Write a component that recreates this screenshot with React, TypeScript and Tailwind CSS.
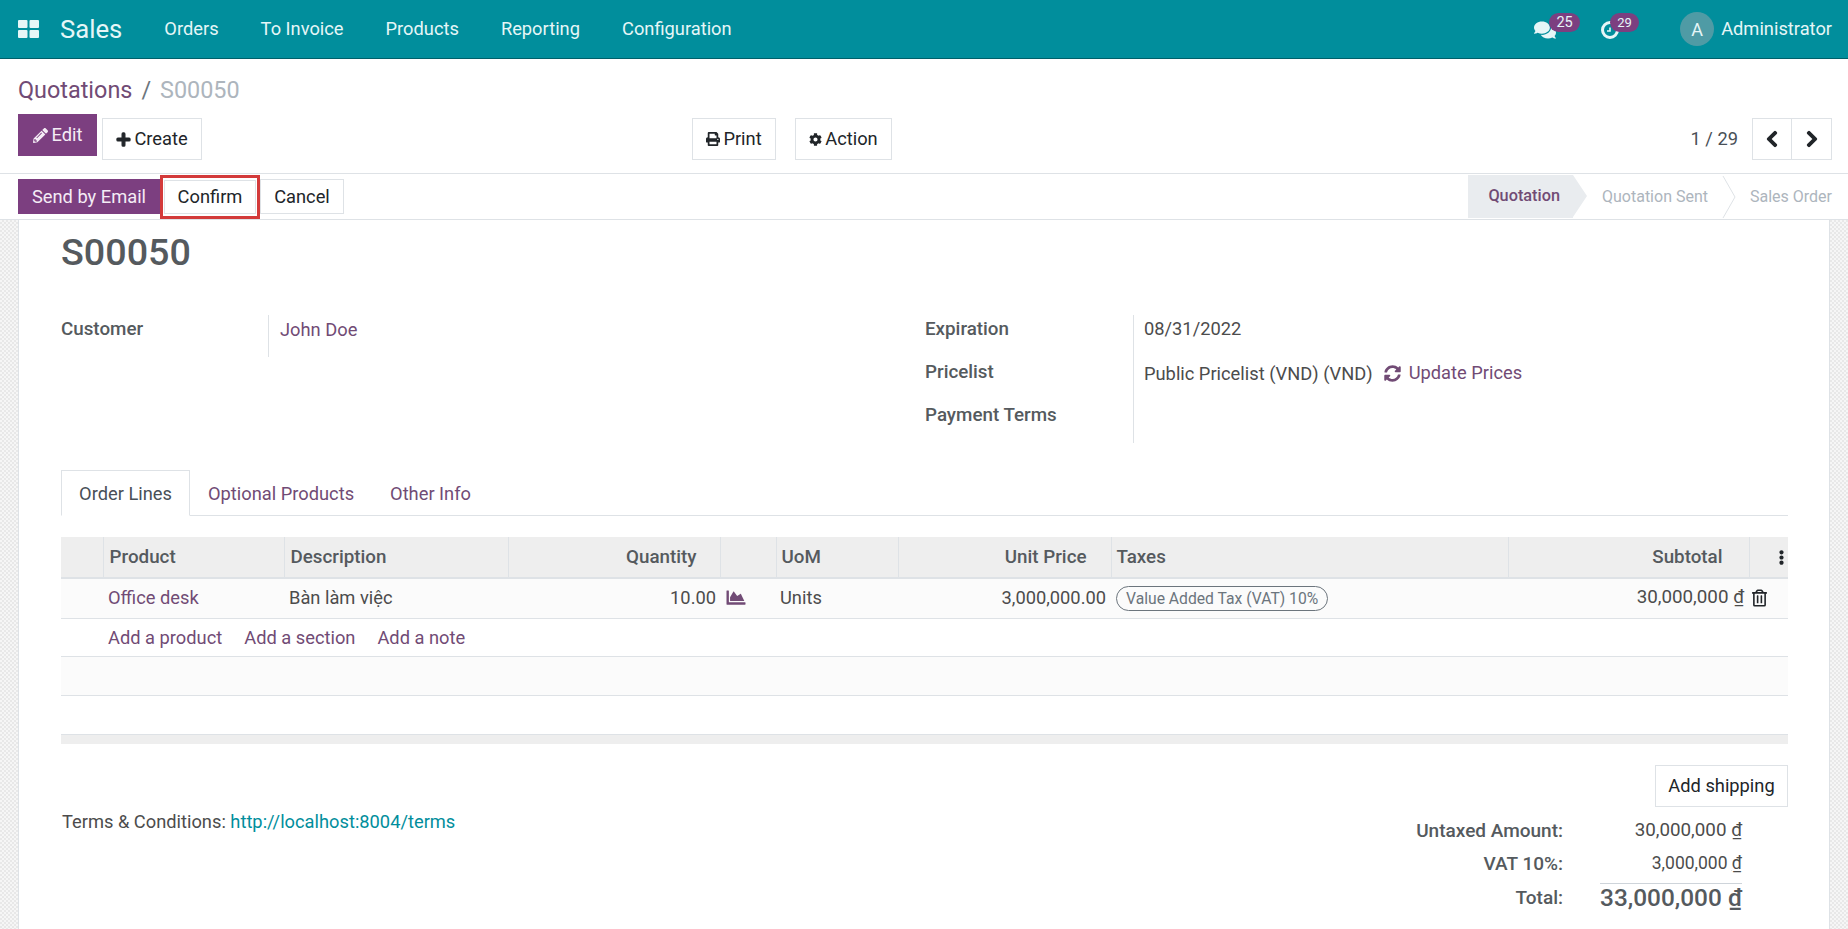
import { FaPencilAlt, FaPlus, FaPrint, FaCog, FaChevronLeft, FaChevronRight, FaComments, FaSyncAlt, FaChartArea, FaRegTrashAlt, FaEllipsisV } from 'react-icons/fa';

const MENU = ['Orders', 'To Invoice', 'Products', 'Reporting', 'Configuration'];

function Navbar() {
  return (
    <header className="flex h-[59px] shrink-0 items-center border-b border-[#00606a] bg-[#018e9c] pl-[18px] pr-[16px] text-[#e6f6f7]">
      <svg viewBox="0 0 21 18" className="h-[18px] w-[21px]" fill="currentColor">
        <rect x="0" y="0" width="9.5" height="8" rx="1" />
        <rect x="11.5" y="0" width="9.5" height="8" rx="1" />
        <rect x="0" y="10" width="9.5" height="8" rx="1" />
        <rect x="11.5" y="10" width="9.5" height="8" rx="1" />
      </svg>
      <span className="ml-[21px] text-[25.7px]">Sales</span>
      <nav className="ml-[42px] flex gap-[42px] text-[18.3px]">
        {MENU.map((item) => (
          <span key={item}>{item}</span>
        ))}
      </nav>
      <div className="ml-auto flex items-center">
        <div className="relative mr-[19px] h-[20px] w-[47px]">
          <FaComments className="mt-[1px] h-[20px] w-[22px]" />
          <span className="absolute -top-[6px] left-[15px] flex h-[19px] w-[31px] items-center justify-center rounded-full bg-[#7c3f80] text-[14.5px]">25</span>
        </div>
        <div className="relative mr-[41px] h-[20px] w-[39px]">
          <svg viewBox="0 0 20 20" className="mt-[1px] h-[20px] w-[20px]" fill="none" stroke="currentColor">
            <circle cx="10" cy="10" r="7.5" strokeWidth="3" />
            <path d="M10 7.5V11H7" strokeWidth="1.6" />
          </svg>
          <span className="absolute -top-[6px] left-[10px] flex h-[19px] w-[29px] items-center justify-center rounded-full bg-[#7c3f80] text-[13px]">29</span>
        </div>
        <span className="flex h-[34px] w-[34px] items-center justify-center rounded-full bg-[#4f9ba5] text-[18px]">A</span>
        <span className="ml-[7px] text-[18.3px]">Administrator</span>
      </div>
    </header>
  );
}

function Btn({ children, className = '' }: { children: React.ReactNode; className?: string }) {
  return (
    <button className={`flex h-[42px] items-center justify-center gap-[3px] border border-[#dee2e6] bg-white text-[18.3px] text-[#212529] ${className}`}>
      {children}
    </button>
  );
}

function ControlPanel() {
  return (
    <div className="shrink-0 border-b border-[#dee2e6] bg-white">
      <div className="pl-[18px] pt-[16px] text-[23.4px] leading-[30px]">
        <span className="text-[#714b75]">Quotations</span>
        <span className="mx-[9px] text-[#6c757d]">/</span>
        <span className="text-[#adb5bd]">S00050</span>
      </div>
      <div className="mt-[1px] flex h-[67px] pl-[18px] pr-[16px]">
        <div className="flex w-[674px] items-start pt-[8px]">
          <button className="flex h-[42px] w-[79px] items-center justify-center gap-[4px] bg-[#7c3f80] text-[18.3px] text-[#f4ecf5]">
            <FaPencilAlt className="h-[15px] w-[15px]" />
            Edit
          </button>
          <Btn className="ml-[5px] mt-[4px] w-[100px]">
            <FaPlus className="h-[15px] w-[15px]" stroke="currentColor" strokeWidth={40} />
            Create
          </Btn>
        </div>
        <div className="flex items-start pt-[12px]">
          <Btn className="w-[84px]">
            <FaPrint className="h-[14px] w-[14px]" />
            Print
          </Btn>
          <Btn className="ml-[19px] w-[97px]">
            <FaCog className="h-[13px] w-[13px]" />
            Action
          </Btn>
        </div>
        <div className="ml-auto flex items-start pt-[12px]">
          <span className="mr-[14px] text-[18.3px] leading-[42px] text-[#495057]">1 / 29</span>
          <div className="flex h-[42px] border border-[#dee2e6] text-[#212529]">
            <span className="flex w-[39px] items-center justify-center border-r border-[#dee2e6]">
              <FaChevronLeft className="h-[18px] w-[14px]" stroke="currentColor" strokeWidth={30} />
            </span>
            <span className="flex w-[39px] items-center justify-center">
              <FaChevronRight className="h-[18px] w-[14px]" stroke="currentColor" strokeWidth={30} />
            </span>
          </div>
        </div>
      </div>
    </div>
  );
}

function StatusBar() {
  return (
    <div className="flex h-[46px] shrink-0 items-stretch border-b border-[#dee2e6] bg-white pl-[18px] pr-[16px]">
      <div className="flex items-center">
        <button className="h-[35px] w-[142px] bg-[#7c3f80] text-[18.3px] text-[#f4ecf5]">Send by Email</button>
        <div className="relative z-10 flex h-[44px] w-[100px] items-center justify-center border-[3px] border-[#d33a3a]">
          <button className="h-[34px] w-[92px] border border-[#dee2e6] text-[18.3px] text-[#212529]">Confirm</button>
        </div>
        <button className="h-[35px] w-[84px] border border-[#dee2e6] text-[18.3px] text-[#212529]">Cancel</button>
      </div>
      <div className="ml-auto flex items-center text-[16px]">
        <div className="relative mr-[29px] flex h-[43px] w-[105px] items-center justify-end bg-[#e9ecef] pr-[13px] text-[16.3px] font-medium text-[#714b75]">
          Quotation
          <span className="absolute left-full top-0 h-0 w-0 border-y-[21.5px] border-l-[14px] border-y-transparent border-l-[#e9ecef]"></span>
        </div>
        <span className="text-[#adb5bd]">Quotation Sent</span>
        <svg viewBox="0 0 14 42" className="mx-[14px] h-[42px] w-[14px]" fill="none" stroke="#dee2e6">
          <path d="M1 0l12 21L1 42" />
        </svg>
        <span className="text-[#adb5bd]">Sales Order</span>
      </div>
    </div>
  );
}

function Field({ label, className = '' }: { label: string; className?: string }) {
  return <div className={`text-[18.8px] font-medium leading-[26px] text-[#555a5e] ${className}`}>{label}</div>;
}

function OrderForm() {
  return (
    <div className="pt-[12px] text-[#4c4c4c]">
      <h1 className="text-[37.7px] font-medium leading-[40px] text-[#555a5e]">S00050</h1>
      <div className="mt-[43px] flex text-[18.3px] leading-[26px]">
        <div className="flex w-[864px]">
          <Field label="Customer" className="w-[207px] pt-[1px]" />
          <div className="h-[42px] border-l border-[#dee2e6] pl-[11px] pt-[2px] text-[#714b75]">John Doe</div>
        </div>
        <div className="flex">
          <div className="w-[208px] space-y-[17px] pt-[1px]">
            <Field label="Expiration" />
            <Field label="Pricelist" />
            <Field label="Payment Terms" />
          </div>
          <div className="h-[128px] border-l border-[#dee2e6] pl-[10px] pt-[1px]">
            <div>08/31/2022</div>
            <div className="mt-[17px] flex items-center">
              <span className="pt-[2px]">Public Pricelist (VND) (VND)</span>
              <FaSyncAlt className="ml-[11px] h-[17px] w-[17px] text-[#714b75]" />
              <span className="ml-[8px] text-[#714b75]">Update Prices</span>
            </div>
          </div>
        </div>
      </div>
    </div>
  );
}

function OrderTabs() {
  return (
    <div className="mt-[27px] flex h-[46px] items-stretch border-b border-[#dee2e6] text-[18.3px] text-[#714b75]">
      <div className="-mb-px flex w-[129px] items-center justify-center border border-[#dee2e6] border-b-white bg-white pt-[2px] text-[#495057]">Order Lines</div>
      <span className="ml-[18px] flex items-center pt-[2px]">Optional Products</span>
      <span className="ml-[36px] flex items-center pt-[2px]">Other Info</span>
    </div>
  );
}

function OrderTable() {
  const th = 'h-[41px] border-l border-[#dee2e6] px-[5px] text-[18.8px] font-medium text-[#555a5e]';
  return (
    <table className="mt-[21px] w-full table-fixed border-collapse text-[18.3px] text-[#4c4c4c]">
      <colgroup>
        <col className="w-[42px]" />
        <col className="w-[181px]" />
        <col className="w-[224px]" />
        <col className="w-[212px]" />
        <col className="w-[56px]" />
        <col className="w-[122px]" />
        <col className="w-[213px]" />
        <col className="w-[397px]" />
        <col className="w-[241px]" />
        <col className="w-[39px]" />
      </colgroup>
      <thead>
        <tr className="border-b-2 border-[#dee2e6] bg-[#eeeeee] text-left">
          <th className="h-[41px]"></th>
          <th className={`${th} pl-[6px]`}>Product</th>
          <th className={`${th} pl-[6px]`}>Description</th>
          <th className={`${th} pr-[23px] text-right`}>Quantity</th>
          <th className={th}></th>
          <th className={th}>UoM</th>
          <th className={`${th} pr-[24px] text-right`}>Unit Price</th>
          <th className={th}>Taxes</th>
          <th className={`${th} pr-[26px] text-right`}>Subtotal</th>
          <th className={th}>
            <FaEllipsisV className="ml-[19px] h-[15px] w-[15px] text-[#212529]" />
          </th>
        </tr>
      </thead>
      <tbody>
        <tr className="h-[40px] border-b border-[#dee2e6] bg-[#fbfbfb]">
          <td></td>
          <td className="px-[5px] pb-[2px] text-[#714b75]">Office desk</td>
          <td className="px-[5px] pb-[2px]">Bàn làm việc</td>
          <td className="px-[4px] pb-[2px] text-right">10.00</td>
          <td className="px-[6px] pb-[1px]">
            <FaChartArea className="h-[19px] w-[20px] text-[#714b75]" />
          </td>
          <td className="px-[4px] pb-[2px]">Units</td>
          <td className="px-[5px] pb-[2px] text-right">3,000,000.00</td>
          <td className="px-[5px] pb-[2px]">
            <span className="inline-block h-[25px] rounded-full border border-[#6c757d] px-[9px] text-[15.7px] leading-[23px] text-[#6c757d]">
              Value Added Tax (VAT) 10%
            </span>
          </td>
          <td className="px-[5px] pb-[2px] text-right text-[18.8px]">
            30,000,000 <span className="underline">₫</span>
          </td>
          <td>
            <FaRegTrashAlt className="ml-[3px] h-[18px] w-[15px] text-[#212529]" />
          </td>
        </tr>
        <tr className="h-[38px] border-b border-[#dee2e6]">
          <td></td>
          <td colSpan={9} className="px-[5px] pt-[2px] text-[#714b75]">
            <span>Add a product</span>
            <span className="ml-[22px]">Add a section</span>
            <span className="ml-[22px]">Add a note</span>
          </td>
        </tr>
        <tr className="h-[39px] border-b border-[#dee2e6] bg-[#fbfbfb]">
          <td colSpan={10}></td>
        </tr>
        <tr className="h-[39px] border-b border-[#dee2e6]">
          <td colSpan={10}></td>
        </tr>
      </tbody>
      <tfoot>
        <tr className="h-[10px] bg-[#eeeeee]">
          <td colSpan={10}></td>
        </tr>
      </tfoot>
    </table>
  );
}

function Totals() {
  return (
    <div className="mt-[21px] flex text-[18.3px] text-[#4c4c4c]">
      <div className="ml-[1px] mt-[43px]">
        Terms &amp; Conditions: <span className="text-[#018e9c]">http://localhost:8004/terms</span>
      </div>
      <div className="ml-auto">
        <div className="flex justify-end">
          <button className="h-[42px] w-[133px] border border-[#dee2e6] text-[18.3px] text-[#212529]">Add shipping</button>
        </div>
        <div className="mr-[46px] mt-[7px] grid grid-cols-[auto_142px] items-center gap-x-[37px] text-right">
          <span className="text-[19px] font-medium leading-[33px] text-[#555a5e]">Untaxed Amount:</span>
          <span className="text-[18.8px] leading-[33px]">30,000,000 <span className="underline">₫</span></span>
          <span className="self-start text-[19px] font-medium leading-[33px] text-[#555a5e]">VAT 10%:</span>
          <span className="border-b border-[#ced4da] pb-[3px] text-[17.5px] leading-[33px]">3,000,000 <span className="underline">₫</span></span>
          <span className="text-[19px] font-medium text-[#555a5e]">Total:</span>
          <span className="text-[24.4px] font-medium leading-[28px] text-[#555a5e]">33,000,000 <span className="underline">₫</span></span>
        </div>
      </div>
    </div>
  );
}

export default function App() {
  return (
    <div className="flex h-[929px] flex-col overflow-hidden bg-white font-['Roboto',sans-serif]">
      <Navbar />
      <ControlPanel />
      <StatusBar />
      <main className="flex-1 overflow-hidden bg-[#eeeeee] bg-[repeating-conic-gradient(#e8e8e8_0_25%,#f6f6f6_0_50%)] bg-[length:4px_4px]">
        <div className="mx-[18px] h-full border-x border-[#dee2e6] bg-white pl-[42px] pr-[41px]">
          <OrderForm />
          <OrderTabs />
          <OrderTable />
          <Totals />
        </div>
      </main>
    </div>
  );
}
